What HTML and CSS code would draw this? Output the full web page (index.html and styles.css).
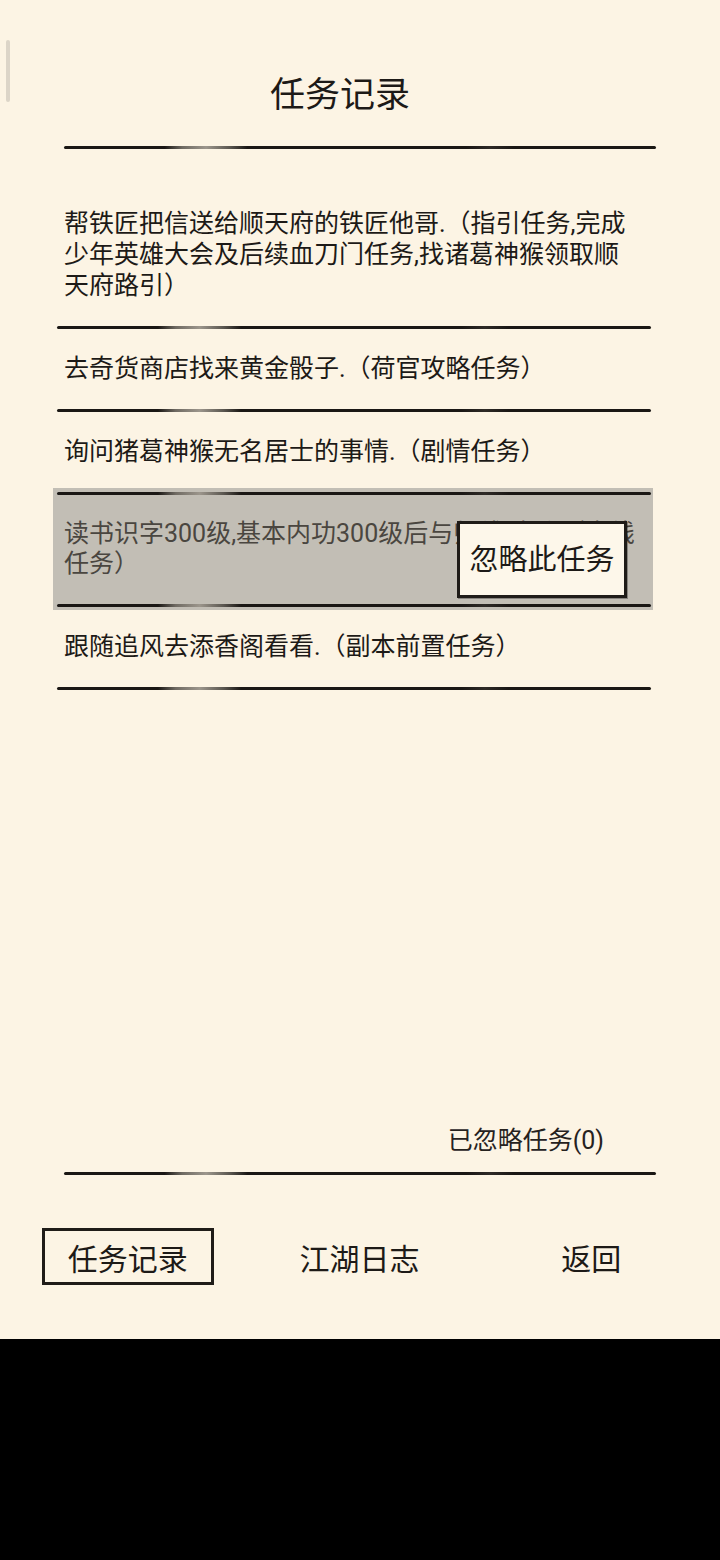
FILE: index.html
```html
<!DOCTYPE html>
<html lang="zh">
<head>
    <meta charset="UTF-8">
    <meta name="viewport" content="width=device-width, initial-scale=1.0">
    <title>任务记录</title>
    <link rel="stylesheet" href="styles.css">
</head>
<body>
    <div class="screen">
        <div class="scrollbar"></div>

        <div class="content">
            <h1 class="title">任务记录</h1>
            <div class="rule rule-wide"></div>

            <div class="tasks">
                <div class="task task-first">帮铁匠把信送给顺天府的铁匠他哥.（指引任务,完成少年英雄大会及后续血刀门任务,找诸葛神猴领取顺天府路引）</div>
                <div class="rule"></div>
                <div class="task">去奇货商店找来黄金骰子.（荷官攻略任务）</div>
                <div class="rule"></div>
                <div class="task">询问猪葛神猴无名居士的事情.（剧情任务）</div>
                <div class="selected">
                    <div class="rule"></div>
                    <div class="task">读书识字300级,基本内功300级后与师傅对话.（支线任务）</div>
                    <div class="rule"></div>
                    <button class="ignore-btn">忽略此任务</button>
                </div>
                <div class="task">跟随追风去添香阁看看.（副本前置任务）</div>
                <div class="rule"></div>
            </div>

            <div class="ignored">已忽略任务(0)</div>
            <div class="rule rule-wide"></div>
        </div>

        <nav class="tabs">
            <div class="tab"><span class="tab-box">任务记录</span></div>
            <div class="tab">江湖日志</div>
            <div class="tab">返回</div>
        </nav>
    </div>
</body>
</html>
```

FILE: styles.css
```css
body { margin: 0; background: #000; font-family: Roboto, "Noto Sans CJK SC", sans-serif; color: #1d1a17; }

.screen { position: relative; height: 1339px; background: #fcf4e4; display: flex; flex-direction: column; overflow: hidden; }
.scrollbar { position: absolute; left: 6px; top: 40px; width: 4px; height: 62px; background: #dcd5c8; border-radius: 2px; }

.content { flex: 1; display: flex; flex-direction: column; padding: 0 64px; }
.title { margin: 74px 0 0; padding-right: 40px; font-size: 35px; font-weight: normal; line-height: 44px; text-align: center; }

.rule { height: 3px; margin: 0 2px 0 4px; border-radius: 2px;
    background: linear-gradient(to right, #1a1714 0%, #1a1714 17%, #6f6a62 20%, #9c968c 24%, #5b5750 28%, #1a1714 31%, #1a1714 68%, #2e2a26 72%, #1a1714 76%, #1a1714 100%); }
.rule-wide { margin: 0; }
.content > .rule-wide:nth-child(2) { margin-top: 28px; }

.tasks { margin: 35px 3px 0 -11px; }
.task { padding: 24px 17px 25px 11px; font-size: 25px; line-height: 31px; }

.selected { position: relative; margin: -4px 0 -3px; padding: 4px 0 3px; background: #c2beb5; }
.selected .task { color: #4a4640; line-height: 30px; }

.ignore-btn { position: absolute; left: 404px; top: 33px; width: 170px; height: 77px; padding: 0 0 6px; border: 3px solid #1f1c18; background: #fdf7ea;
    font-family: inherit; font-size: 29px; color: #1d1a17; box-shadow: 1px 1px 0 rgba(0, 0, 0, 0.3); }

.ignored { margin-top: auto; padding-right: 52px; font-size: 25px; line-height: 30px; text-align: right; color: #26221e; }
.ignored + .rule { margin-top: 16px; }

.tabs { display: grid; grid-template-columns: repeat(3, 1fr); padding: 53px 13px 54px 12px; }
.tab { display: flex; justify-content: center; align-items: center; height: 57px; font-size: 30px; }
.tab-box { display: flex; justify-content: center; align-items: center; width: 166px; height: 51px; border: 3px solid #1f1c18; }
```
